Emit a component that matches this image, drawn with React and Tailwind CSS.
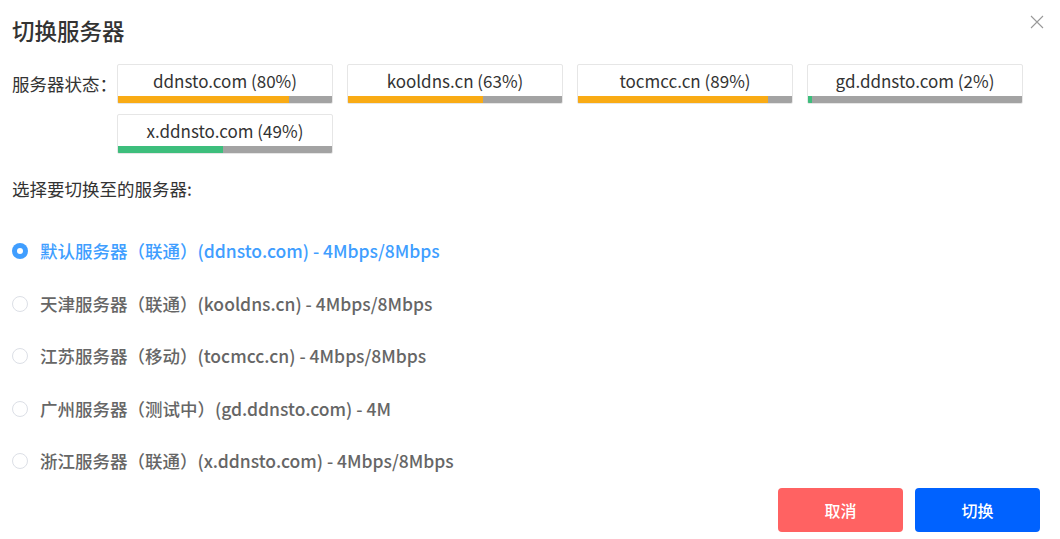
import { useState } from 'react';

const STATUS = [
  { host: 'ddnsto.com', pct: 80, color: 'bg-[#f9ab15]' },
  { host: 'kooldns.cn', pct: 63, color: 'bg-[#f9ab15]' },
  { host: 'tocmcc.cn', pct: 89, color: 'bg-[#f9ab15]' },
  { host: 'gd.ddnsto.com', pct: 2, color: 'bg-[#3dbe7c]' },
  { host: 'x.ddnsto.com', pct: 49, color: 'bg-[#3dbe7c]' },
];

const SERVERS = [
  '默认服务器（联通）(ddnsto.com) - 4Mbps/8Mbps',
  '天津服务器（联通）(kooldns.cn) - 4Mbps/8Mbps',
  '江苏服务器（移动）(tocmcc.cn) - 4Mbps/8Mbps',
  '广州服务器（测试中）(gd.ddnsto.com) - 4M',
  '浙江服务器（联通）(x.ddnsto.com) - 4Mbps/8Mbps',
];

export default function App() {
  const [selected, setSelected] = useState(0);

  return (
    <div className="w-[1060px] h-[539px] bg-white text-[#333] font-['Noto_Sans_CJK_SC',sans-serif] overflow-hidden">
      {/* Header */}
      <div className="flex items-start justify-between pl-3 pr-[15px] pt-[14px]">
        <h1 className="text-[22.5px] leading-[32px] font-medium text-[#333]">切换服务器</h1>
        <button className="w-[16px] h-[16px] flex items-center justify-center text-[#999]">
          <svg width="14" height="14" viewBox="0 0 14 14" fill="none" stroke="currentColor" strokeWidth="1.1">
            <path d="M1 1 L13 13 M13 1 L1 13" />
          </svg>
        </button>
      </div>

      {/* Server status */}
      <div className="flex items-start pl-3 mt-[18px]">
        <div className="w-[105px] shrink-0 h-[40px] flex items-center text-[17.5px]">服务器状态：</div>
        <div className="flex flex-wrap gap-x-[14px] gap-y-[10px] w-[920px]">
          {STATUS.map(s => (
            <div key={s.host} className="w-[216px] h-[40px] border border-[#e6e6e6] rounded-[2px] flex flex-col overflow-hidden">
              <div className="h-[31px] flex items-center justify-center text-[17px] text-[#333]">
                {s.host} ({s.pct}%)
              </div>
              <div className="h-[7px] flex bg-[#a3a3a3]">
                <div className={`${s.color} h-full`} style={{ width: `${s.pct}%` }} />
              </div>
            </div>
          ))}
        </div>
      </div>

      {/* Server choice */}
      <div className="pl-3 mt-[23px] text-[17.5px] leading-[24px]">选择要切换至的服务器:</div>
      <div className="pl-3 mt-[24px] flex flex-col">
        {SERVERS.map((name, i) => {
          const active = i === selected;
          return (
            <label key={name} onClick={() => setSelected(i)} className="h-[52.5px] flex items-center cursor-pointer">
              {active ? (
                <span className="w-4 h-4 rounded-full bg-[#409eff] flex items-center justify-center">
                  <span className="w-[6px] h-[6px] rounded-full bg-white" />
                </span>
              ) : (
                <span className="w-4 h-4 rounded-full border border-[#dcdfe6] bg-white" />
              )}
              <span className={`ml-3 text-[17.5px] font-medium ${active ? 'text-[#409eff]' : 'text-[#666]'}`}>{name}</span>
            </label>
          );
        })}
      </div>

      {/* Actions */}
      <div className="flex justify-end gap-3 pr-5">
        <button className="w-[125px] h-[44px] rounded-[4px] bg-[#ff6262] text-white text-[16px] font-medium">取消</button>
        <button className="w-[125px] h-[44px] rounded-[4px] bg-[#0062ff] text-white text-[16px] font-medium">切换</button>
      </div>
    </div>
  );
}
